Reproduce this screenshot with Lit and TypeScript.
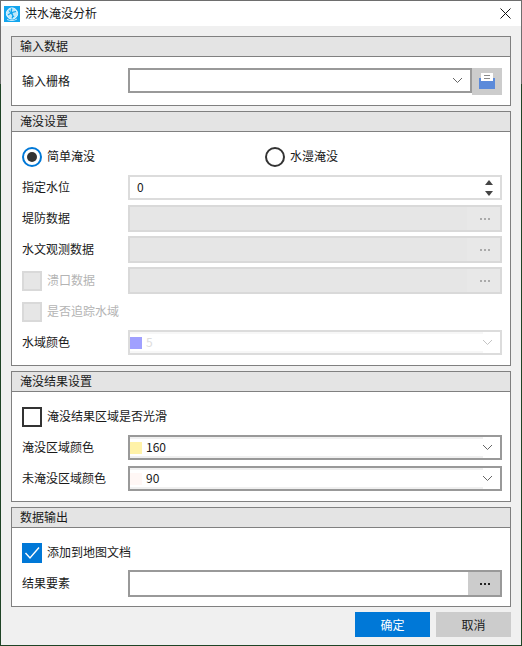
import { LitElement, html, css, svg } from "lit";
import { customElement } from "lit/decorators.js";

const chevron = svg`<svg class="chev" width="11" height="7" viewBox="0 0 11 7"><path d="M1 1 L5.5 5.5 L10 1" fill="none" stroke="currentColor" stroke-width="1"/></svg>`;

@customElement("app-root")
export class AppRoot extends LitElement {
  static styles = css`
    :host {
      display: block;
      width: 522px;
      height: 646px;
      font-family: "Noto Sans CJK SC", "Noto Sans", sans-serif;
      font-size: 12px;
      line-height: 16px;
      color: #1a1a1a;
    }
    * { box-sizing: border-box; }
    .win {
      width: 522px;
      height: 646px;
      padding: 1px;
      background: linear-gradient(#6e6e6e 84px, #1f4426 84px);
      display: flex;
      flex-direction: column;
    }
    .title {
      height: 25px;
      flex: none;
      background: #fff;
      display: flex;
      align-items: center;
      padding: 0 10px 0 3px;
    }
    .logo { width: 16px; height: 16px; margin-right: 5px; flex: none; }
    .title-text { flex: 1; font-size: 12px; padding-bottom: 2px; }
    .close { display: block; }
    .content {
      flex: 1;
      background: #f0f0f0;
      padding: 10px 10px 0;
      display: flex;
      flex-direction: column;
      gap: 5px;
    }
    .group {
      border: 1px solid #808080;
      background: #fff;
      flex: none;
    }
    .head {
      height: 20px;
      background: #e4e4e4;
      border-bottom: 1px solid #808080;
      padding: 0 0 2px 8px;
      display: flex;
      align-items: center;
    }
    .body {
      padding: 15px 8px 10px 10px;
      display: flex;
      flex-direction: column;
    }
    .body.first { padding-top: 11px; }
    .body.last { padding-bottom: 9px; }
    .row { display: flex; align-items: center; }
    .m4 { margin-top: 4px; }
    .m5 { margin-top: 5px; }
    .m6 { margin-top: 6px; }
    .m7 { margin-top: 7px; }
    .m8 { margin-top: 8px; }
    .label { width: 106px; flex: none; padding-bottom: 2px; }
    .t { padding-bottom: 2px; }
    .dis { color: #b4b4b4; }
    .radios { display: grid; grid-template-columns: 243px 1fr; }
    .opt { display: flex; align-items: center; gap: 5px; height: 20px; }
    .radio {
      width: 20px; height: 20px; border-radius: 50%;
      border: 2px solid #333;
      display: flex; align-items: center; justify-content: center;
      flex: none;
    }
    .radio.on { border-color: #0078d7; }
    .radio.on::after {
      content: ""; width: 10px; height: 10px; border-radius: 50%; background: #333;
    }
    .cb {
      width: 20px; height: 20px; flex: none;
      border: 2px solid #333;
      display: flex; align-items: center; justify-content: center;
    }
    .cb.off { border-color: #d9d9d9; background: #e6e6e6; }
    .cb.on { border: 0; background: #0078d7; }
    .cbspace { width: 106px; flex: none; }
    .field {
      height: 27px;
      width: 374px;
      flex: none;
      border: 2px solid #999;
      display: flex;
      align-items: stretch;
    }
    .h25 { height: 25px; }
    .fill { flex: 1; }
    .light { border-color: #dcdcdc; }
    .value { flex: 1; display: flex; align-items: center; padding: 0 0 2px 7px; }
    .spin { width: 27px; display: flex; flex-direction: column; align-items: center; justify-content: center; gap: 6px; padding-left: 4px; }
    .spin svg { display: block; }
    .disabled { border-color: #d9d9d9; background: #e6e6e6; }
    .more {
      width: 33px;
      display: flex; align-items: center; justify-content: center;
      gap: 2px;
      padding-left: 2px;
    }
    .more i { width: 2px; height: 2px; background: #aaa; display: block; }
    .disabled .more { background: #e8e8e8; }
    .more.active { background: #ccc; width: 32px; }
    .more.active i { background: #222; }
    .inner {
      flex: 1;
      display: flex;
      align-items: center;
      gap: 4px;
      background: #fff;
      border-top: 2px solid #f0f0f0;
      border-bottom: 2px solid #f0f0f0;
    }
    .combo-dis .inner { border-color: #f7f7f7; }
    .swatch { width: 12px; height: 12px; flex: none; }
    .tail {
      width: 17px; flex: none;
      display: flex; align-items: center; justify-content: flex-start;
      color: #666;
    }
    .tail .chev { display: block; margin-left: -1px; }
    .combo-dis { color: #ddd; }
    .combo-dis .tail { color: #c4c4c4; }
    .first-combo {
      width: 344px; height: 25px; flex: none;
      border: 2px solid #999;
      display: flex; align-items: center; justify-content: flex-end;
      padding-right: 7px;
      color: #666;
      align-self: flex-start;
    }
    .browse {
      width: 30px; height: 27px; flex: none;
      background: #ccc;
      display: flex; align-items: center; justify-content: center;
    }
    .browse svg { display: block; }
    .buttons {
      display: flex;
      justify-content: flex-end;
      gap: 6px;
    }
    .btn {
      width: 75px; height: 25px;
      display: flex; align-items: center; justify-content: center;
      background: #ccc;
    }
    .btn.primary { background: #0078d7; color: #fff; }
    .check { display: block; }
  `;

  private combo(color: string, value: string, disabled = false) {
    return html`<div class="field h25 ${disabled ? "combo-dis light" : ""}">
      <div class="inner">
        <span class="swatch" style="background:${color}"></span>
        <span class="t">${value}</span>
      </div>
      <div class="tail">${chevron}</div>
    </div>`;
  }

  private disabledField() {
    return html`<div class="field disabled">
      <div class="fill"></div>
      <div class="more"><i></i><i></i><i></i></div>
    </div>`;
  }

  render() {
    return html`<div class="win">
      <div class="title">
        <svg class="logo" viewBox="0 0 16 16">
          <rect width="16" height="16" fill="#12a5ee"/>
          <circle cx="8" cy="7.5" r="5.6" fill="#bfe8fb" stroke="#e8f8ff" stroke-width="1"/>
          <path d="M8 2.5 C5 6 11 8 8 12.5 M4 9 C6 7 9 6 12 5.5 M5 4.5 L10 11" stroke="#12a5ee" stroke-width="1.2" fill="none"/>
          <path d="M3 13.5 C6 15 10 15 13 13" stroke="#bfe8fb" stroke-width="1" fill="none"/>
        </svg>
        <span class="title-text">洪水淹没分析</span>
        <svg class="close" width="11" height="11" viewBox="0 0 11 11">
          <path d="M0.5 0.5 L10.5 10.5 M10.5 0.5 L0.5 10.5" stroke="#111" stroke-width="1" fill="none"/>
        </svg>
      </div>
      <div class="content">
        <section class="group">
          <div class="head">输入数据</div>
          <div class="body first">
            <div class="row">
              <span class="label">输入栅格</span>
              <div class="first-combo">${chevron}</div>
              <div class="browse">
                <svg width="16" height="17" viewBox="0 0 16 17">
                  <path d="M0 5 H16 V16 H0 Z" fill="#5b8ada"/>
                  <path d="M2 0 H14 V8 H2 Z" fill="#fff"/>
                  <path d="M5 2.5 H11 M5 5.5 H11" stroke="#8a8a8a" stroke-width="1" fill="none"/>
                </svg>
              </div>
            </div>
          </div>
        </section>

        <section class="group">
          <div class="head">淹没设置</div>
          <div class="body">
            <div class="radios">
              <label class="opt"><span class="radio on"></span><span class="t">简单淹没</span></label>
              <label class="opt"><span class="radio"></span><span class="t">水漫淹没</span></label>
            </div>
            <div class="row m8">
              <span class="label">指定水位</span>
              <div class="field h25 light">
                <div class="value">0</div>
                <div class="spin">
                  <svg width="8" height="5" viewBox="0 0 8 5"><path d="M4 0 L8 5 H0 Z" fill="#444"/></svg>
                  <svg width="8" height="5" viewBox="0 0 8 5"><path d="M0 0 H8 L4 5 Z" fill="#444"/></svg>
                </div>
              </div>
            </div>
            <div class="row m5">
              <span class="label">堤防数据</span>
              ${this.disabledField()}
            </div>
            <div class="row m4">
              <span class="label">水文观测数据</span>
              ${this.disabledField()}
            </div>
            <div class="row m4">
              <div class="opt cbspace dis"><span class="cb off"></span><span class="t">溃口数据</span></div>
              ${this.disabledField()}
            </div>
            <div class="opt dis m8"><span class="cb off"></span><span class="t">是否追踪水域</span></div>
            <div class="row m8">
              <span class="label">水域颜色</span>
              ${this.combo("#a0a0ff", "5", true)}
            </div>
          </div>
        </section>

        <section class="group">
          <div class="head">淹没结果设置</div>
          <div class="body">
            <div class="opt"><span class="cb"></span><span class="t">淹没结果区域是否光滑</span></div>
            <div class="row m8">
              <span class="label">淹没区域颜色</span>
              ${this.combo("#fff2a8", "160")}
            </div>
            <div class="row m6">
              <span class="label">未淹没区域颜色</span>
              ${this.combo("#fff7f5", "90")}
            </div>
          </div>
        </section>

        <section class="group">
          <div class="head">数据输出</div>
          <div class="body last">
            <div class="opt">
              <span class="cb on">
                <svg class="check" width="20" height="20" viewBox="0 0 20 20">
                  <path d="M3.5 10 L8 15 L17 4.5" stroke="#fff" stroke-width="1.4" fill="none"/>
                </svg>
              </span><span class="t">添加到地图文档</span>
            </div>
            <div class="row m7">
              <span class="label">结果要素</span>
              <div class="field">
                <div class="fill"></div>
                <div class="more active"><i></i><i></i><i></i></div>
              </div>
            </div>
          </div>
        </section>

        <div class="buttons">
          <div class="btn primary">确定</div>
          <div class="btn">取消</div>
        </div>
      </div>
    </div>`;
  }
}
